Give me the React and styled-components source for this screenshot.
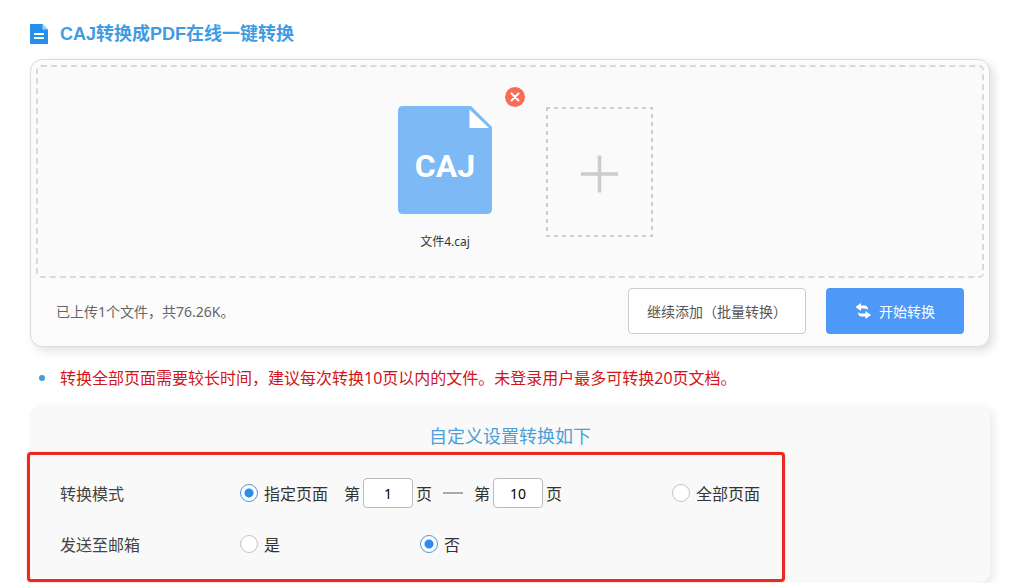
import React, { useState } from "react";
import styled, { createGlobalStyle } from "styled-components";

const GlobalStyle = createGlobalStyle`
  * {
    box-sizing: border-box;
  }
  body {
    margin: 0;
    background: #fff;
    color: #333;
    font-family: "Noto Sans", "Noto Sans CJK SC", sans-serif;
    font-size: 16px;
  }
  button,
  input {
    font-family: inherit;
  }
`;

const DocIcon = () => (
  <svg width="18" height="20" viewBox="0 0 18 20" aria-hidden="true">
    <path d="M0 0H12.5L18 5.5V20H0Z" fill="#2490ee" />
    <path d="M12.5 0L18 5.5H12.5Z" fill="#a5d2f9" />
    <path d="M4 9H14V11H4ZM4 13H14V15H4Z" fill="#fff" />
  </svg>
);

const CajIcon = () => (
  <svg width="94" height="108" viewBox="0 0 94 108" aria-hidden="true">
    <path
      d="M5 0H73L94 21V103Q94 108 89 108H5Q0 108 0 103V5Q0 0 5 0Z"
      fill="#7db9f5"
    />
    <path d="M71.5 3.5V22H91Z" fill="#fff" />
    <text
      x="47"
      y="71"
      textAnchor="middle"
      fill="#fff"
      fontFamily="Roboto, sans-serif"
      fontSize="32"
      fontWeight="700"
    >
      CAJ
    </text>
  </svg>
);

const CloseIcon = () => (
  <svg width="20" height="20" viewBox="0 0 20 20" aria-hidden="true">
    <circle cx="10" cy="10" r="10" fill="#fb6b55" />
    <path
      d="M6.5 6.5L13.5 13.5M13.5 6.5L6.5 13.5"
      stroke="#fff"
      strokeWidth="2"
      strokeLinecap="round"
    />
  </svg>
);

const AddIcon = () => (
  <svg width="107" height="130" viewBox="0 0 107 130" fill="none" aria-hidden="true">
    <rect
      x="1"
      y="1"
      width="105"
      height="128"
      stroke="#ccc"
      strokeWidth="2"
      strokeDasharray="4 4"
      strokeDashoffset="1"
    />
    <path d="M53.5 48.5V85.5M35 67H72" stroke="#ccc" strokeWidth="3.6" />
  </svg>
);

const SwapIcon = () => (
  <svg width="16" height="16" viewBox="0 0 16 16" aria-hidden="true">
    <path
      d="M0.5 4L6 0V2.5H9.5Q13 2.5 13 7Q11.8 5.5 9.5 5.5H6V8Z"
      fill="#fff"
    />
    <path
      d="M16 12L10.5 16V13.5H6.5Q3 13.5 3 9Q4.2 10.5 6.5 10.5H10.5V8Z"
      fill="#fff"
    />
  </svg>
);

const App = () => {
  const [mode, setMode] = useState("range");
  const [mail, setMail] = useState("no");
  const [from, setFrom] = useState("1");
  const [to, setTo] = useState("10");

  return (
    <Page>
      <GlobalStyle />
      <Title>
        <DocIcon />
        CAJ转换成PDF在线一键转换
      </Title>

      <UploadCard>
        <DropZone>
          <FileItem>
            <CajIcon />
            <FileName>文件4.caj</FileName>
            <RemoveBtn type="button" aria-label="删除">
              <CloseIcon />
            </RemoveBtn>
          </FileItem>
          <AddBox type="button" aria-label="添加文件">
            <AddIcon />
          </AddBox>
        </DropZone>
        <CardFooter>
          <Summary>已上传1个文件，共76.26K。</Summary>
          <MoreBtn type="button">继续添加（批量转换）</MoreBtn>
          <StartBtn type="button">
            <SwapIcon />
            开始转换
          </StartBtn>
        </CardFooter>
      </UploadCard>

      <Notice>
        <li>
          转换全部页面需要较长时间，建议每次转换10页以内的文件。未登录用户最多可转换20页文档。
        </li>
      </Notice>

      <Settings>
        <SettingsTitle>自定义设置转换如下</SettingsTitle>
        <Rows>
          <Row role="radiogroup" aria-labelledby="mode">
            <RowName id="mode">转换模式</RowName>
            <Option $wide>
              <RadioLabel>
                <Radio
                  name="mode"
                  checked={mode === "range"}
                  onChange={() => setMode("range")}
                />
                指定页面
              </RadioLabel>
              <PageRange>
                <PageField>
                  第
                  <input value={from} onChange={(e) => setFrom(e.target.value)} />
                  页
                </PageField>
                <Dash />
                <PageField>
                  第
                  <input value={to} onChange={(e) => setTo(e.target.value)} />
                  页
                </PageField>
              </PageRange>
            </Option>
            <Option>
              <RadioLabel>
                <Radio
                  name="mode"
                  checked={mode === "all"}
                  onChange={() => setMode("all")}
                />
                全部页面
              </RadioLabel>
            </Option>
          </Row>
          <Row role="radiogroup" aria-labelledby="mail">
            <RowName id="mail">发送至邮箱</RowName>
            <Option>
              <RadioLabel>
                <Radio
                  name="mail"
                  checked={mail === "yes"}
                  onChange={() => setMail("yes")}
                />
                是
              </RadioLabel>
            </Option>
            <Option>
              <RadioLabel>
                <Radio
                  name="mail"
                  checked={mail === "no"}
                  onChange={() => setMail("no")}
                />
                否
              </RadioLabel>
            </Option>
          </Row>
          <Highlight />
        </Rows>
      </Settings>
    </Page>
  );
};

const Page = styled.main`
  padding: 22px 40px 0 30px;
`;

const Title = styled.h1`
  display: flex;
  align-items: center;
  gap: 12px;
  margin: 0 0 13px;
  color: #3f9be2;
  font-family: "Liberation Sans", "Noto Sans CJK SC", sans-serif;
  font-size: 18px;
  line-height: 24px;
  font-weight: 700;
`;

const UploadCard = styled.section`
  padding: 5px 5px 12px;
  border: 1px solid #dcdcdc;
  border-radius: 12px;
  background: #fbfbfb;
  box-shadow: 4px 4px 10px rgba(0, 0, 0, 0.12);
`;

const DropZone = styled.div`
  display: flex;
  justify-content: center;
  align-items: flex-start;
  gap: 23px;
  padding: 39px 0 26px;
  border: 2px dashed #d9d9d9;
  border-radius: 5px;
  background: #fafafa;
`;

const FileItem = styled.div`
  position: relative;
  display: flex;
  flex-direction: column;
  align-items: center;
  gap: 20px;
  width: 156px;
`;

const FileName = styled.span`
  font-size: 12px;
  line-height: 16px;
`;

const RemoveBtn = styled.button`
  position: absolute;
  top: -19px;
  right: -2px;
  display: flex;
  padding: 0;
  border: 0;
  background: none;
  cursor: pointer;
`;

const AddBox = styled.button`
  display: flex;
  margin: 1px 0 0;
  padding: 0;
  border: 0;
  background: none;
  cursor: pointer;
`;

const CardFooter = styled.div`
  display: flex;
  align-items: center;
  gap: 20px;
  margin-top: 10px;
  padding: 0 20px;
`;

const Summary = styled.span`
  flex: 1;
  color: #666;
  font-size: 14px;
`;

const Btn = styled.button`
  display: flex;
  align-items: center;
  height: 46px;
  border-radius: 4px;
  font-size: 14px;
  cursor: pointer;
`;

const MoreBtn = styled(Btn)`
  padding: 0 18px;
  border: 1px solid #ccc;
  background: #fff;
  color: #555;
`;

const StartBtn = styled(Btn)`
  gap: 8px;
  padding: 0 29px;
  border: 0;
  background: #4e98f7;
  color: #fff;
`;

const Notice = styled.ul`
  margin: 19px 0 14px;
  padding: 0 0 0 9px;
  list-style: none;
  color: #d0161b;
  line-height: 24px;
  & > li {
    display: flex;
    align-items: center;
    gap: 15px;
  }
  & > li::before {
    content: "";
    width: 6px;
    height: 6px;
    border-radius: 50%;
    background: #3b9de6;
  }
`;

const Settings = styled.section`
  padding: 20px 30px 24px;
  border-radius: 12px;
  background: #f9f9f9;
  box-shadow: 4px 4px 10px rgba(0, 0, 0, 0.08);
`;

const SettingsTitle = styled.h2`
  margin: 0 0 30px;
  color: #4c9fd8;
  font-size: 18px;
  line-height: 24px;
  font-weight: 400;
  text-align: center;
`;

const Rows = styled.div`
  position: relative;
  display: flex;
  flex-direction: column;
  gap: 21px;
`;

const Row = styled.div`
  display: flex;
  align-items: center;
  height: 30px;
`;

const RowName = styled.span`
  width: 180px;
  color: #444;
`;

const Option = styled.div`
  display: flex;
  align-items: center;
  gap: 16px;
  width: ${(props) => (props.$wide ? "432px" : "180px")};
`;

const RadioLabel = styled.label`
  display: flex;
  align-items: center;
  gap: 6px;
  cursor: pointer;
`;

const Radio = styled.input.attrs({ type: "radio" })`
  appearance: none;
  width: 18px;
  height: 18px;
  margin: 0;
  border: 1px solid ${(props) => (props.checked ? "#4a97dd" : "#c4c4c4")};
  border-radius: 50%;
  background: ${(props) =>
    props.checked
      ? "radial-gradient(circle, #2d8cf0 0 4px, #fff 5px)"
      : "#fff"};
`;

const PageRange = styled.div`
  display: flex;
  align-items: center;
  gap: 11px;
`;

const PageField = styled.label`
  display: flex;
  align-items: center;
  gap: 3px;
  & > input {
    width: 50px;
    height: 30px;
    padding: 0;
    border: 1px solid #bbb;
    border-radius: 4px;
    background: #fff;
    color: #000;
    font-size: 14px;
    text-align: center;
  }
`;

const Dash = styled.span`
  width: 20px;
  height: 2px;
  background: #aaa;
`;

// red frame drawn over both rows
const Highlight = styled.div`
  position: absolute;
  top: -26px;
  bottom: -23px;
  left: -33px;
  right: 175px;
  border: 3px solid #ea2a20;
  border-radius: 4px;
  box-shadow: 0 0 1px #ea2a20;
  pointer-events: none;
`;

export default App;
